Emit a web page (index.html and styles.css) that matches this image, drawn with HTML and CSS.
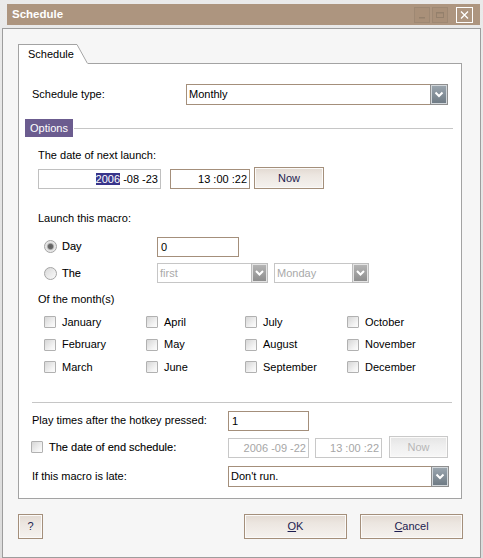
FILE: index.html
```html
<!DOCTYPE html>
<html>
<head>
<meta charset="utf-8">
<title>Schedule</title>
<link rel="stylesheet" href="styles.css">
</head>
<body>
<svg class="defs" width="0" height="0" aria-hidden="true">
  <defs>
    <linearGradient id="gArrow" x1="0" y1="0" x2="0" y2="1">
      <stop offset="0" stop-color="#9aa5ae"/>
      <stop offset="1" stop-color="#6f7b85"/>
    </linearGradient>
    <linearGradient id="gArrowDis" x1="0" y1="0" x2="0" y2="1">
      <stop offset="0" stop-color="#b4b4b4"/>
      <stop offset="1" stop-color="#8e8e8e"/>
    </linearGradient>
  </defs>
</svg>
<div class="window">
  <div class="titlebar">
    <span class="title">Schedule</span>
    <div class="tb-buttons">
      <span class="tb-btn tb-dim"><svg width="14" height="14" viewBox="0 0 14 14"><rect x="4" y="9" width="6" height="1.5" fill="#94806c"/></svg></span>
      <span class="tb-btn tb-dim tb-max"><svg width="14" height="14" viewBox="0 0 14 14"><rect x="3.5" y="4.5" width="7" height="5" fill="none" stroke="#94806c"/><rect x="3.5" y="4.5" width="7" height="1" fill="#94806c"/></svg></span>
      <span class="tb-btn tb-close"><svg width="15" height="14" viewBox="0 0 15 14"><path d="M4 3.5 L11 10.5 M11 3.5 L4 10.5" stroke="#fff" stroke-width="1.3" fill="none"/></svg></span>
    </div>
  </div>

  <div class="client">
    <div class="tabrow">
      <div class="tab">Schedule</div>
      <svg class="tab-slant" width="11" height="20" viewBox="0 0 11 20"><polygon points="0,0 0.5,0 11,19 11,20 0,20" fill="#fff"/><line x1="0" y1="0.5" x2="10.5" y2="19.5" stroke="#a3a3a3" stroke-width="1"/></svg>
      <div class="tab-fill"></div>
    </div>

    <div class="panel">
      <div class="row r-type">
        <span class="lbl w-type">Schedule type:</span>
        <div class="select sel-type">
          <span class="sel-text">Monthly</span>
          <span class="sel-btn"><svg width="18" height="21" viewBox="0 0 18 21"><rect x="0.5" y="0.5" width="17" height="20" fill="#d2d7db" stroke="#8f8f8f"/><rect x="2" y="2" width="14" height="17" fill="url(#gArrow)"/><polyline points="5.5,8.5 9,12 12.5,8.5" fill="none" stroke="#fff" stroke-width="2"/></svg></span>
        </div>
      </div>

      <div class="row r-options">
        <span class="options">Options</span>
        <span class="options-line"></span>
      </div>

      <div class="txt r-next">The date of next launch:</div>

      <div class="row r-date">
        <div class="field gray right f-date"><span class="hl">2006</span> -08 -23</div>
        <div class="field right f-time">13 :00 :22</div>
        <div class="btn b-now">Now</div>
      </div>

      <div class="txt r-launch">Launch this macro:</div>

      <div class="row r-day">
        <span class="radio checked"></span>
        <span class="opt-lbl w-day">Day</span>
        <div class="field f-day">0</div>
      </div>

      <div class="row r-the">
        <span class="radio"></span>
        <span class="opt-lbl w-day">The</span>
        <div class="select disabled sel-first">
          <span class="sel-text">first</span>
          <span class="sel-btn"><svg width="17" height="20" viewBox="0 0 17 20"><rect x="0.5" y="0.5" width="16" height="19" fill="#e4e4e4" stroke="#bdbdbd"/><rect x="2" y="2" width="13" height="16" fill="url(#gArrowDis)"/><polyline points="5,8 8.5,11.5 12,8" fill="none" stroke="#fff" stroke-width="2"/></svg></span>
        </div>
        <div class="select disabled sel-monday">
          <span class="sel-text">Monday</span>
          <span class="sel-btn"><svg width="17" height="20" viewBox="0 0 17 20"><rect x="0.5" y="0.5" width="16" height="19" fill="#e4e4e4" stroke="#bdbdbd"/><rect x="2" y="2" width="13" height="16" fill="url(#gArrowDis)"/><polyline points="5,8 8.5,11.5 12,8" fill="none" stroke="#fff" stroke-width="2"/></svg></span>
        </div>
      </div>

      <div class="txt r-month">Of the month(s)</div>

      <div class="months">
        <div class="month"><span class="check"></span><span class="m-lbl">January</span></div>
        <div class="month"><span class="check"></span><span class="m-lbl">February</span></div>
        <div class="month"><span class="check"></span><span class="m-lbl">March</span></div>
        <div class="month"><span class="check"></span><span class="m-lbl">April</span></div>
        <div class="month"><span class="check"></span><span class="m-lbl">May</span></div>
        <div class="month"><span class="check"></span><span class="m-lbl">June</span></div>
        <div class="month"><span class="check"></span><span class="m-lbl">July</span></div>
        <div class="month"><span class="check"></span><span class="m-lbl">August</span></div>
        <div class="month"><span class="check"></span><span class="m-lbl">September</span></div>
        <div class="month"><span class="check"></span><span class="m-lbl">October</span></div>
        <div class="month"><span class="check"></span><span class="m-lbl">November</span></div>
        <div class="month"><span class="check"></span><span class="m-lbl">December</span></div>
      </div>

      <div class="sep"></div>

      <div class="row r-play">
        <span class="lbl w-play">Play times after the hotkey pressed:</span>
        <div class="field f-play">1</div>
      </div>

      <div class="row r-end">
        <span class="check"></span>
        <span class="opt-lbl w-end">The date of end schedule:</span>
        <div class="field disabled right f-enddate">2006 -09 -22</div>
        <div class="field disabled right f-endtime">13 :00 :22</div>
        <div class="btn disabled b-now2">Now</div>
      </div>

      <div class="row r-late">
        <span class="lbl w-play">If this macro is late:</span>
        <div class="select sel-late">
          <span class="sel-text">Don't run.</span>
          <span class="sel-btn"><svg width="18" height="21" viewBox="0 0 18 21"><rect x="0.5" y="0.5" width="17" height="20" fill="#d2d7db" stroke="#8f8f8f"/><rect x="2" y="2" width="14" height="17" fill="url(#gArrow)"/><polyline points="5.5,8.5 9,12 12.5,8.5" fill="none" stroke="#fff" stroke-width="2"/></svg></span>
        </div>
      </div>
    </div>

    <div class="footer">
      <div class="btn b-help">?</div>
      <div class="btn b-ok"><u>O</u>K</div>
      <div class="btn b-cancel"><u>C</u>ancel</div>
    </div>
  </div>
</div>
</body>
</html>
```

FILE: styles.css
```css
* { box-sizing: border-box; }
html, body { margin: 0; padding: 0; }
body {
  width: 483px;
  height: 558px;
  overflow: hidden;
  font-family: "Liberation Sans", Arial, sans-serif;
  font-size: 11px;
  line-height: 13px;
  color: #000;
  background: #e0e0e0;
}
.defs { display: block; width: 0; height: 0; overflow: hidden; }

.window {
  width: 483px;
  height: 558px;
  background: linear-gradient(#eaeaea, #dcdcdc);
  padding: 4px 2px 0 2px;
  display: flex;
  flex-direction: column;
}

/* title bar */
.titlebar {
  flex: none;
  height: 21px;
  margin: 0 1px 0 5px;
  background: #ad957f;
  display: flex;
  align-items: flex-start;
  padding: 3px 7px 0 5px;
}
.title {
  color: #fff;
  font-weight: bold;
  font-size: 11.5px;
  line-height: 15px;
  flex: 1;
}
.tb-buttons { display: flex; }
.tb-btn {
  width: 16px;
  height: 16px;
  display: flex;
  align-items: center;
  justify-content: center;
}
.tb-dim { border: 1px solid #9e8873; background: #a99079; }
.tb-max { margin-left: 2px; }
.tb-close { width: 17px; border: 1px solid #fff; margin-left: 8px; }

/* client area */
.client {
  flex: none;
  margin-top: 3px;
  height: 530px;
  border: 1px solid #9d9d9d;
  background: #f6f6f6;
  padding: 15px 18px 18px 15px;
  display: flex;
  flex-direction: column;
}

.tabrow { flex: none; display: flex; height: 20px; }
.tab {
  width: 59px;
  height: 20px;
  background: #fff;
  border-left: 1px solid #a3a3a3;
  border-top: 1px solid #a3a3a3;
  padding-left: 9px;
  line-height: 19px;
}
.tab-slant { display: block; flex: none; }
.tab-fill { flex: 1; height: 20px; border-bottom: 1px solid #a3a3a3; }

.panel {
  flex: 1;
  min-height: 0;
  overflow: hidden;
  background: #fff;
  border: 1px solid #a3a3a3;
  border-top: none;
}

.row { display: flex; align-items: center; }
.txt { height: 13px; margin-left: 19px; }
.lbl { flex: none; }

.r-type { margin-top: 20px; height: 21px; padding-left: 13px; }
.w-type { width: 154px; }

.r-options { margin-top: 14px; height: 18px; margin-left: 6px; margin-right: 8px; }
.options {
  width: 48px;
  height: 18px;
  line-height: 18px;
  text-align: center;
  background: #6b5c8f;
  color: #fff;
}
.options-line { flex: 1; height: 1px; margin-left: 1px; background: #c6c6c6; }

.r-next { margin-top: 12px; }

.r-date { margin-top: 5px; height: 22px; margin-left: 19px; align-items: flex-end; }
.f-date { width: 123px; }
.f-time { width: 80px; margin-left: 9px; }
.b-now { width: 70px; height: 22px; margin-left: 4px; }
.hl { background: #38348a; color: #fff; }

.r-launch { margin-top: 23px; }

.r-day { margin-top: 12px; height: 19px; padding-left: 25px; }
.r-the { margin-top: 7px; height: 20px; padding-left: 25px; }
.opt-lbl { flex: none; margin-left: 5px; -webkit-text-stroke: 0.12px #000; }
.w-day { width: 95px; }
.f-day { width: 82px; height: 19px; line-height: 17px; }

.r-month { margin-top: 10px; }

.months {
  margin-top: 5px;
  margin-left: 25px;
  display: grid;
  grid-auto-flow: column;
  grid-template-rows: 22px 23px 22px;
  grid-template-columns: 102px 99px 102px 100px;
}
.month { display: flex; align-items: center; }
.m-lbl { margin-left: 6px; }

.check {
  flex: none;
  width: 12px;
  height: 12px;
  border: 1px solid #b1b1b1;
  border-radius: 1px;
  background: linear-gradient(135deg, #d6d6d6, #f4f4f4 70%, #fcfcfc);
}

.radio {
  flex: none;
  width: 13px;
  height: 13px;
  border-radius: 50%;
  border: 1px solid #a4a4a4;
  background: linear-gradient(135deg, #d8d8d8, #fbfbfb);
}
.radio.checked {
  background: radial-gradient(circle, #5e5e5e 0, #6a6a6a 2.2px, #b4b4b4 3.2px, #e2e2e2 4px, #f7f7f7 100%);
}

.sep { margin: 24px 9px 0 13px; height: 1px; background: #c6c6c6; }

.r-play { margin-top: 8px; height: 19px; padding-left: 13px; }
.w-play { width: 196px; }
.f-play { width: 81px; height: 19px; line-height: 17px; }

.r-end { margin-top: 6px; height: 22px; padding-left: 12px; }
.r-end .field { align-self: flex-end; }
.w-end { width: 179px; margin-left: 6px; }
.f-enddate { width: 81px; }
.f-endtime { width: 67px; margin-left: 6px; }
.b-now2 { width: 59px; height: 22px; margin-left: 7px; }

.r-late { margin-top: 8px; height: 21px; padding-left: 13px; }

/* fields */
.field {
  flex: none;
  height: 20px;
  border: 1px solid #a48f7b;
  background: #fff;
  line-height: 18px;
  padding: 0 3px;
  white-space: nowrap;
}
.field.gray { border-color: #c0c0c0; }
.field.right { text-align: right; padding-right: 2px; }
.field.disabled { border-color: #c8c8c8; color: #a6a6a6; }

/* selects */
.select { display: flex; flex: none; height: 21px; }
.sel-text {
  flex: 1;
  background: #fff;
  border: 1px solid #a48f7b;
  border-right: none;
  padding-left: 2px;
  line-height: 19px;
}
.sel-btn { flex: none; display: flex; }
.sel-btn svg { display: block; }
.sel-type { width: 262px; }
.sel-late { width: 221px; }
.select.disabled { height: 20px; }
.select.disabled .sel-text { border-color: #c6c6c6; color: #a9a9a9; line-height: 18px; }
.sel-first { width: 111px; }
.sel-monday { width: 95px; margin-left: 6px; }

/* buttons */
.btn {
  flex: none;
  border: 1px solid #a48f7b;
  background: linear-gradient(#e2d9d1 0%, #ece6e0 35%, #f5f2ef 100%);
  box-shadow: inset 0 0 0 1px #fbfaf9;
  display: flex;
  align-items: center;
  justify-content: center;
  color: #1c1c50;
}
.btn.disabled {
  border-color: #c9c9c9;
  color: #b6b6b6;
  background: linear-gradient(#e4e4e4 0%, #eeeeee 40%, #f7f7f7 100%);
}

.footer { flex: none; display: flex; margin-top: 15px; margin-right: -1px; height: 25px; }
.b-help { width: 25px; height: 25px; }
.b-ok { width: 103px; height: 25px; margin-left: auto; }
.b-cancel { width: 103px; height: 25px; margin-left: 13px; }
.btn u { text-decoration: underline; }
```
